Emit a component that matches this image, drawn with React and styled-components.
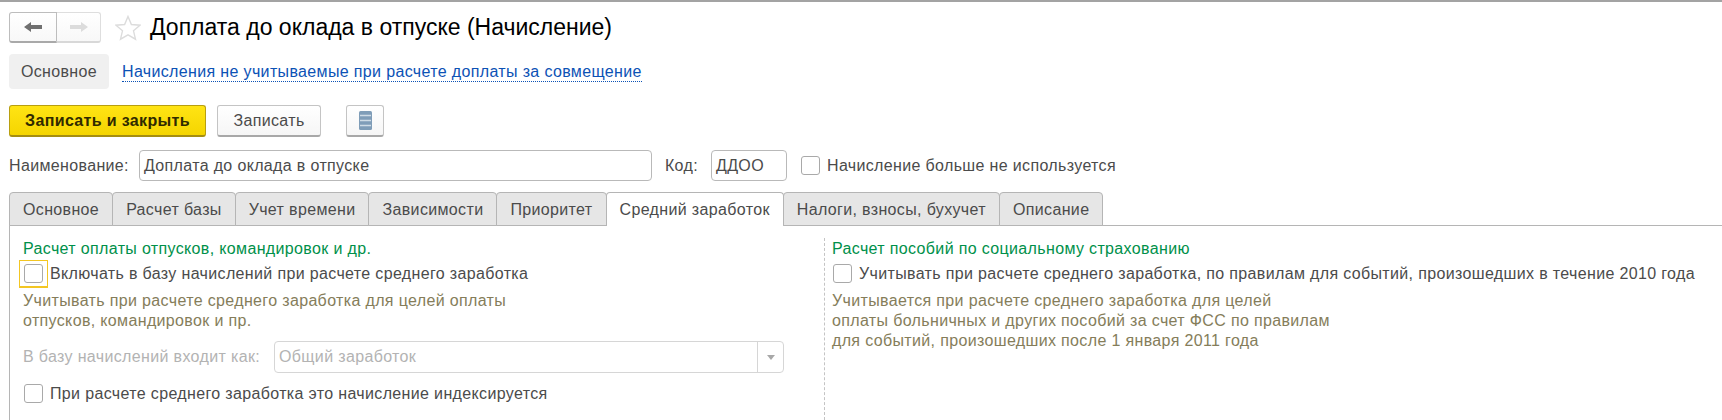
import React from "react";
import styled, { createGlobalStyle } from "styled-components";

const Global = createGlobalStyle`
  html, body { margin: 0; padding: 0; background: #fff; }
  body {
    font-family: "Liberation Sans", Arial, sans-serif;
    font-size: 16px;
    letter-spacing: 0.35px;
    color: #4b4b4b;
  }
`;

const Page = styled.div`
  width: 1722px;
  height: 420px;
  box-sizing: border-box;
  border-top: 2px solid #a3a3a3;
  padding: 10px 0 0 9px;
  overflow: hidden;
`;

const Header = styled.div`
  display: flex;
  align-items: center;
  height: 31px;
`;

const NavGroup = styled.div`
  display: flex;
  width: 92px;
  height: 31px;
`;

const NavButton = styled.div`
  flex: ${(p) => (p.$active ? "0 0 48px" : "1")};
  display: flex;
  align-items: center;
  justify-content: center;
  box-sizing: border-box;
  border: 1px solid ${(p) => (p.$active ? "#bdbdbd" : "#dedede")};
  border-left-width: ${(p) => (p.$active ? "1px" : "0")};
  border-bottom: 2px solid ${(p) => (p.$active ? "#a9a9a9" : "#d8d8d8")};
  border-radius: ${(p) => (p.$active ? "3px 0 0 3px" : "0 3px 3px 0")};
  background: linear-gradient(#fff, #f8f8f8);
`;

const StarIcon = styled.svg`
  width: 26px;
  height: 26px;
  margin: 0 9px 0 14px;
`;

const Title = styled.h1`
  margin: 0;
  font-size: 23px;
  font-weight: 400;
  letter-spacing: 0;
  color: #000;
  white-space: nowrap;
`;

const SectionRow = styled.div`
  display: flex;
  align-items: center;
  gap: 13px;
  margin-top: 11px;
  height: 35px;
`;

const SectionTab = styled.div`
  width: 100px;
  height: 35px;
  line-height: 35px;
  text-align: center;
  border-radius: 4px;
  background: #f0f0f0;
`;

const SectionLink = styled.a`
  color: #0c52b5;
  border-bottom: 1px dotted #0c52b5;
  line-height: 18px;
  margin-top: 1px;
`;

const CommandBar = styled.div`
  display: flex;
  margin-top: 16px;
  height: 32px;
`;

const Button = styled.div`
  display: flex;
  align-items: center;
  justify-content: center;
  box-sizing: border-box;
  height: 32px;
  width: ${(p) => p.$width}px;
  margin-right: ${(p) => p.$gap || 0}px;
  border-radius: 3px;
  border: 1px solid ${(p) => (p.$primary ? "#b89f10" : "#c4c4c4")};
  border-bottom: 2px solid ${(p) => (p.$primary ? "#a58e10" : "#a8a8a8")};
  background: ${(p) =>
    p.$primary ? "linear-gradient(#ffe414, #f5d500)" : "linear-gradient(#fff, #f6f6f6)"};
  color: ${(p) => (p.$primary ? "#2f2a00" : "#4b4b4b")};
  font-weight: ${(p) => (p.$primary ? 700 : 400)};
`;

const FieldRow = styled.div`
  display: flex;
  align-items: center;
  margin-top: 13px;
  height: 31px;
`;

const Label = styled.span`
  color: ${(p) => (p.$disabled ? "#b3b3b3" : "#4b4b4b")};
  white-space: nowrap;
`;

const CodeLabel = styled(Label)`
  margin-left: 13px;
`;

const Input = styled.div`
  box-sizing: border-box;
  width: ${(p) => p.$width}px;
  height: 31px;
  line-height: 29px;
  margin-left: ${(p) => p.$left}px;
  padding-left: 4px;
  border: 1px solid #b9b9b9;
  border-radius: 4px;
  background: #fff;
  white-space: nowrap;
`;

const Check = styled.span`
  display: inline-block;
  flex: none;
  box-sizing: border-box;
  width: 19px;
  height: 19px;
  border: 1px solid #a9a9a9;
  border-radius: 3px;
  background: #fff;
`;

const CheckFrame = styled.span`
  display: flex;
  align-items: center;
  justify-content: center;
  flex: none;
  box-sizing: border-box;
  width: 29px;
  height: 28px;
  border: 1px solid ${(p) => (p.$focused ? "#f3c623" : "transparent")};
  border-bottom-width: 2px;
`;

const CheckRow = styled.label`
  display: flex;
  align-items: center;
  gap: 2px;
  height: 28px;
  margin: ${(p) => p.$top || 0}px 0 0 ${(p) => p.$left ?? -4}px;
`;

const Tabs = styled.div`
  display: flex;
  margin-top: 11px;
  height: 34px;
  box-sizing: border-box;
  border-bottom: 1px solid #b5b5b5;
`;

const Tab = styled.div`
  box-sizing: border-box;
  height: 34px;
  line-height: 33px;
  padding: 0 13px;
  margin-left: -1px;
  white-space: nowrap;
  border: 1px solid #b5b5b5;
  border-bottom: ${(p) => (p.$active ? "none" : "1px solid #b5b5b5")};
  border-radius: 4px 4px 0 0;
  background: ${(p) => (p.$active ? "#fff" : "#e6e6e6")};
  &:first-child {
    margin-left: 0;
  }
`;

const Panel = styled.div`
  display: grid;
  grid-template-columns: 814px 1fr;
  height: 194px;
  box-sizing: border-box;
  border-left: 1px solid #b5b5b5;
  padding-top: 12px;
`;

const LeftColumn = styled.div`
  padding-left: 13px;
`;

const RightColumn = styled.div`
  border-left: 1px dashed #c4c4c4;
  padding-left: 7px;
`;

const GroupTitle = styled.div`
  color: #00904a;
  line-height: 22px;
`;

const Hint = styled.div`
  color: #857d5a;
  line-height: 20px;
  margin-top: 3px;
  white-space: pre-line;
`;

const SelectRow = styled.div`
  display: flex;
  align-items: center;
  margin-top: 10px;
`;

const Select = styled.div`
  display: flex;
  box-sizing: border-box;
  width: 510px;
  height: 32px;
  margin-left: 14px;
  border: 1px solid #d6d6d6;
  border-radius: 4px;
  color: #b3b3b3;
  line-height: 30px;
  padding-left: 4px;
`;

const SelectText = styled.span`
  flex: 1;
`;

const SelectArrow = styled.span`
  flex: none;
  width: 25px;
  display: flex;
  align-items: center;
  justify-content: center;
  border-left: 1px solid #d6d6d6;
  &::after {
    content: "";
    border: 4px solid transparent;
    border-top: 5px solid #a8a8a8;
    border-bottom: 0;
  }
`;

const tabs = [
  "Основное",
  "Расчет базы",
  "Учет времени",
  "Зависимости",
  "Приоритет",
  "Средний заработок",
  "Налоги, взносы, бухучет",
  "Описание",
];

export default function App() {
  return (
    <Page>
      <Global />
      <Header>
        <NavGroup>
          <NavButton $active>
            <svg width="18" height="10" viewBox="0 0 18 10">
              <path d="M0 5 7 0v3h11v4H7v3z" fill="#707070" />
            </svg>
          </NavButton>
          <NavButton>
            <svg width="18" height="10" viewBox="0 0 18 10">
              <path d="M18 5 11 0v3H0v4h11v3z" fill="#dcdcdc" />
            </svg>
          </NavButton>
        </NavGroup>
        <StarIcon viewBox="0 0 26 26">
          <path
            d="M13 1.5l3.4 8 8.6.7-6.5 5.6 2 8.4L13 19.8l-7.500 4.400 2-8.400L1 10.200l8.600-.7z"
            fill="none"
            stroke="#dcdcdc"
            strokeWidth="1.4"
          />
        </StarIcon>
        <Title>Доплата до оклада в отпуске (Начисление)</Title>
      </Header>

      <SectionRow>
        <SectionTab>Основное</SectionTab>
        <SectionLink>Начисления не учитываемые при расчете доплаты за совмещение</SectionLink>
      </SectionRow>

      <CommandBar>
        <Button $primary $width={197} $gap={11}>Записать и закрыть</Button>
        <Button $width={104} $gap={25}>Записать</Button>
        <Button $width={38}>
          <svg width="13" height="19" viewBox="0 0 13 19">
            <rect width="13" height="19" rx="1.500" fill="#7f9db8" />
            <path d="M1 4.500h11M1 9.500h11M1 14.500h11" stroke="#cfdce6" strokeWidth="1.500" />
          </svg>
        </Button>
      </CommandBar>

      <FieldRow>
        <Label>Наименование:</Label>
        <Input $width={513} $left={10}>Доплата до оклада в отпуске</Input>
        <CodeLabel>Код:</CodeLabel>
        <Input $width={76} $left={13}>ДДОО</Input>
        <CheckRow $left={9}>
          <CheckFrame><Check /></CheckFrame>
          <Label>Начисление больше не используется</Label>
        </CheckRow>
      </FieldRow>

      <Tabs>
        {tabs.map((t) => (
          <Tab key={t} $active={t === "Средний заработок"}>{t}</Tab>
        ))}
      </Tabs>

      <Panel>
        <LeftColumn>
          <GroupTitle>Расчет оплаты отпусков, командировок и др.</GroupTitle>
          <CheckRow>
            <CheckFrame $focused><Check /></CheckFrame>
            <Label>Включать в базу начислений при расчете среднего заработка</Label>
          </CheckRow>
          <Hint>{"Учитывать при расчете среднего заработка для целей оплаты\nотпусков, командировок и пр."}</Hint>
          <SelectRow>
            <Label $disabled>В базу начислений входит как:</Label>
            <Select>
              <SelectText>Общий заработок</SelectText>
              <SelectArrow />
            </Select>
          </SelectRow>
          <CheckRow $top={7}>
            <CheckFrame><Check /></CheckFrame>
            <Label>При расчете среднего заработка это начисление индексируется</Label>
          </CheckRow>
        </LeftColumn>
        <RightColumn>
          <GroupTitle>Расчет пособий по социальному страхованию</GroupTitle>
          <CheckRow>
            <CheckFrame><Check /></CheckFrame>
            <Label>Учитывать при расчете среднего заработка, по правилам для событий, произошедших в течение 2010 года</Label>
          </CheckRow>
          <Hint>{"Учитывается при расчете среднего заработка для целей\nоплаты больничных и других пособий за счет ФСС по правилам\nдля событий, произошедших после 1 января 2011 года"}</Hint>
        </RightColumn>
      </Panel>
    </Page>
  );
}
